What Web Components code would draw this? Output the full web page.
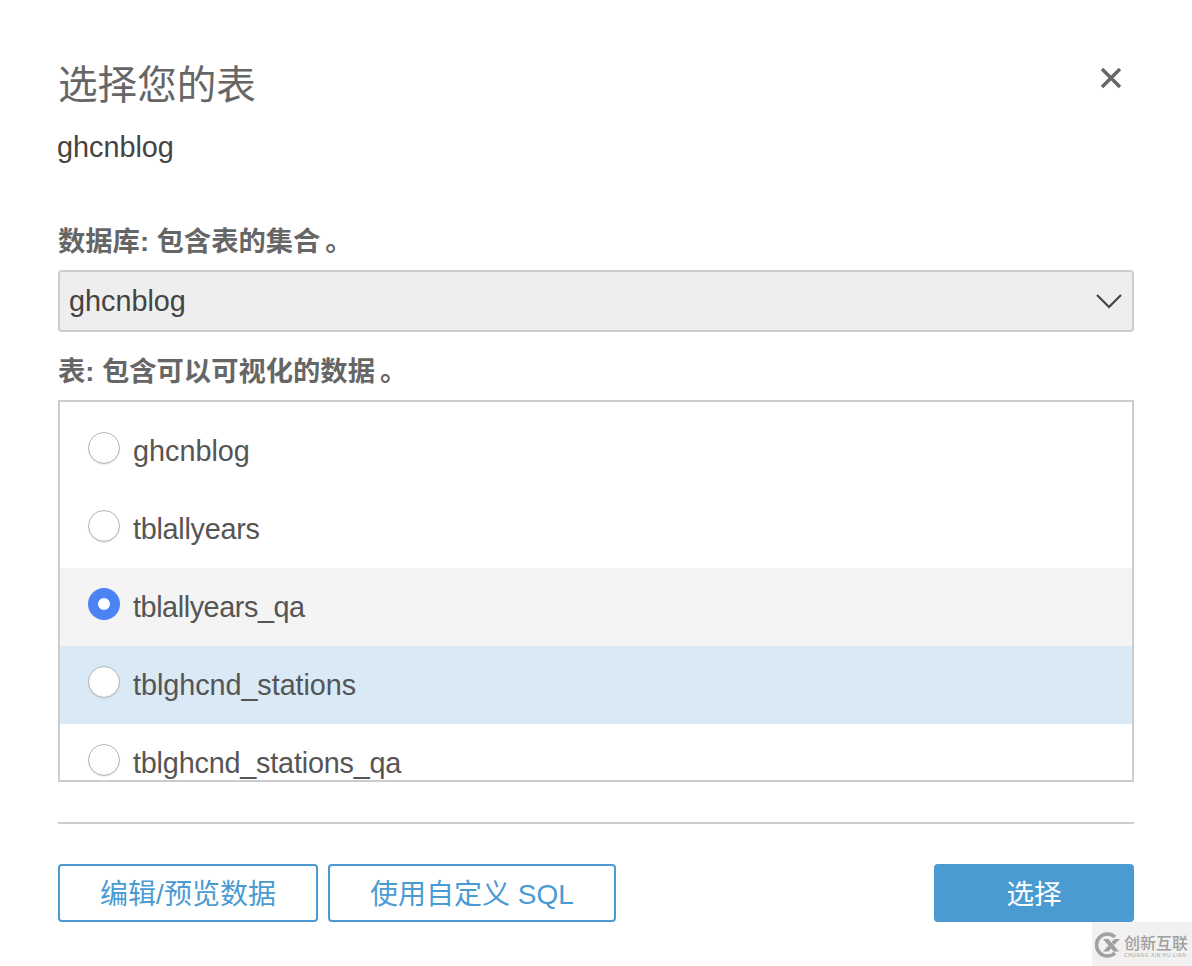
<!DOCTYPE html>
<html lang="zh">
<head>
<meta charset="utf-8">
<title>选择您的表</title>
<style>
html, body { margin: 0; padding: 0; background: #fff; }
body { font-family: "Liberation Sans", "Noto Sans CJK SC", sans-serif; color: #555; }
.stop { margin-left: 5px; }
</style>
</head>
<body>
<table-dialog heading="选择您的表" subtitle="ghcnblog">
  <field-label style="height:48px">数据库: 包含表的集合<span class="stop">。</span></field-label>
  <db-select value="ghcnblog"></db-select>
  <field-label>表: 包含可以可视化的数据<span class="stop">。</span></field-label>
  <table-list>
    <table-row>ghcnblog</table-row>
    <table-row style="letter-spacing:-.27px">tblallyears</table-row>
    <table-row checked hover style="letter-spacing:-.43px">tblallyears_qa</table-row>
    <table-row selected style="letter-spacing:-.06px">tblghcnd_stations</table-row>
    <table-row style="letter-spacing:-.2px">tblghcnd_stations_qa</table-row>
  </table-list>
  <action-button slot="footer" style="width:260px">编辑/预览数据</action-button>
  <action-button slot="footer" style="width:288px">使用自定义 SQL</action-button>
  <action-button slot="footer" primary style="width:200px;margin-left:auto">选择</action-button>
</table-dialog>
<brand-mark></brand-mark>

<script>
class TableDialog extends HTMLElement {
    constructor() {
        super();
        this.attachShadow({mode: 'open'});
    }

    connectedCallback() {
        this.shadowRoot.innerHTML = `
            <style>
                :host { display: block; width: 1192px; height: 966px; box-sizing: border-box; padding: 58px 58px 0; }
                header { display: flex; justify-content: space-between; align-items: flex-start; height: 54px; }
                h1 { margin: 0; font-size: 39.6px; line-height: 54px; font-weight: 400; color: #666; }
                svg { display: block; margin: 8px 11px 0 0; }
                .sub { margin-top: 13px; height: 45px; font-size: 28.8px; line-height: 44px; color: #444; margin-left: -1px; }
                main { margin-top: 52px; }
                hr { border: 0; height: 2px; background: #ccc; margin: 40px 0 40px; }
                footer { display: flex; gap: 10px; }
            </style>
            <header>
                <h1>${this.getAttribute('heading')}</h1>
                <svg width="24" height="24" viewBox="0 0 24 24"><path d="M3 3 L21 21 M21 3 L3 21" stroke="#666" stroke-width="3.4" fill="none"/></svg>
            </header>
            <div class="sub">${this.getAttribute('subtitle')}</div>
            <main><slot></slot></main>
            <hr>
            <footer><slot name="footer"></slot></footer>
        `;
    }
}

class FieldLabel extends HTMLElement {
    constructor() {
        super();
        this.attachShadow({mode: 'open'});
        this.shadowRoot.innerHTML = `
            <style>
                :host { display: block; box-sizing: border-box; height: 40px; font-size: 27.3px; line-height: 40px; font-weight: 700; color: #666; }
            </style>
            <slot></slot>
        `;
    }
}

class DbSelect extends HTMLElement {
    constructor() {
        super();
        this.attachShadow({mode: 'open'});
    }

    connectedCallback() {
        this.shadowRoot.innerHTML = `
            <style>
                :host { display: flex; align-items: center; justify-content: space-between; box-sizing: border-box; height: 62px; margin: 0 0 20px; padding: 0 10px 0 9px; background: #eee; border: 2px solid #ccc; border-radius: 4px; font-size: 28.8px; color: #444; }
                svg { display: block; }
            </style>
            <span>${this.getAttribute('value')}</span>
            <svg width="26" height="16" viewBox="0 0 26 16"><path d="M1 2 L13 14 L25 2" stroke="#444" stroke-width="2.2" fill="none"/></svg>
        `;
    }
}

class TableList extends HTMLElement {
    constructor() {
        super();
        this.attachShadow({mode: 'open'});
        this.shadowRoot.innerHTML = `
            <style>
                :host { display: block; box-sizing: border-box; height: 382px; margin-top: 8px; padding-top: 10px; border: 2px solid #ccc; overflow: hidden; }
            </style>
            <slot></slot>
        `;
    }
}

class TableRow extends HTMLElement {
    constructor() {
        super();
        this.attachShadow({mode: 'open'});
        this.shadowRoot.innerHTML = `
            <style>
                :host { display: flex; align-items: center; gap: 13px; height: 78px; box-sizing: border-box; padding: 0 0 0 28px; font-size: 28.8px; color: #555; }
                :host([hover]) { background: #f4f4f4; }
                :host([selected]) { background: #d9e9f5; }
                .radio { flex: none; box-sizing: border-box; width: 32px; height: 32px; margin-bottom: 6px; border-radius: 50%; background: #fff; border: 1px solid #b4b4b4; box-shadow: inset 0 -1px 1px rgba(0,0,0,.06), 0 1px 1px rgba(0,0,0,.06); }
                :host([checked]) .radio { border: 10px solid #4c83f3; box-shadow: none; }
            </style>
            <span class="radio"></span>
            <span><slot></slot></span>
        `;
    }
}

class ActionButton extends HTMLElement {
    constructor() {
        super();
        this.attachShadow({mode: 'open'});
        this.shadowRoot.innerHTML = `
            <style>
                :host { display: flex; align-items: center; justify-content: center; box-sizing: border-box; height: 58px; padding-bottom: 2px; border: 2px solid #4b9bd3; border-radius: 4px; font-size: 28px; color: #4b9bd3; background: #fff; }
                :host([primary]) { background: #4b9bd3; color: #fff; font-size: 27.6px; }
            </style>
            <slot></slot>
        `;
    }
}

class BrandMark extends HTMLElement {
    constructor() {
        super();
        this.attachShadow({mode: 'open'});
        this.shadowRoot.innerHTML = `
            <style>
                :host { position: absolute; left: 1092px; top: 922px; width: 100px; height: 44px; box-sizing: border-box; padding: 10px 0 0 3px; display: flex; gap: 3px; background: #f1f1f1; color: #a0a0a0; overflow: hidden; }
                svg { flex: none; display: block; }
                .name { margin-top: 3px; font-size: 16px; line-height: 17px; font-weight: 500; white-space: nowrap; }
                .pin { font-size: 5px; line-height: 6px; letter-spacing: .55px; white-space: nowrap; }
            </style>
            <svg width="26" height="26" viewBox="0 0 26 26">
                <path d="M20 5 A11 11 0 1 0 20 21" stroke="#a0a0a0" stroke-width="3.6" fill="none"/>
                <path d="M8 7 L13.5 7 L24 19.5 L18.5 19.5 Z M25 7 L19.5 7 L16.5 10 L19 13 Z M8 19.5 L13.5 19.5 L16 16.5 L13.5 13.5 Z" fill="#a0a0a0"/>
            </svg>
            <div><div class="name">创新互联</div><div class="pin">CHUANG XIN HU LIAN</div></div>
        `;
    }
}

customElements.define('table-dialog', TableDialog);
customElements.define('field-label', FieldLabel);
customElements.define('db-select', DbSelect);
customElements.define('table-list', TableList);
customElements.define('table-row', TableRow);
customElements.define('action-button', ActionButton);
customElements.define('brand-mark', BrandMark);
</script>
</body>
</html>
